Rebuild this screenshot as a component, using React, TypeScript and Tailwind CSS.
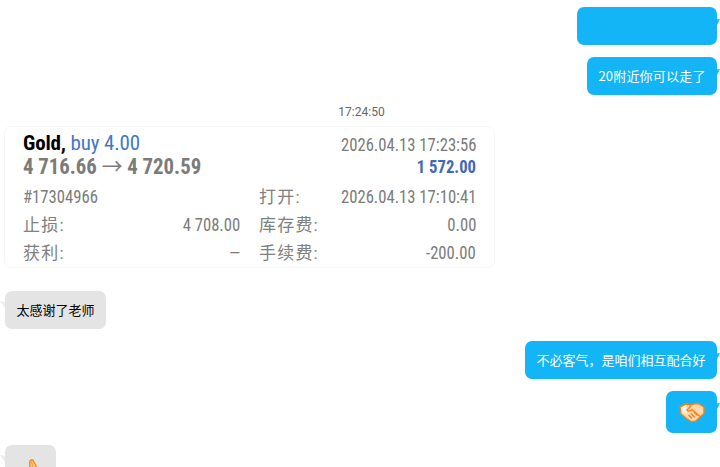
import React from "react";

const cardFont = "font-['Roboto','Noto_Sans_CJK_SC',sans-serif] [font-stretch:75%]";

function Tail({ side }: { side: "left" | "right" }) {
    if (side === "right") {
        return (
            <svg className="absolute top-[12px] right-[-3px]" width="3" height="6" viewBox="0 0 3 6">
                <path d="M0 0.5 L0 6 L3 0 Z" fill="#13b5f7" />
            </svg>
        );
    }
    return (
        <svg className="absolute top-[10px] left-[-5px]" width="5" height="7" viewBox="0 0 5 7">
            <path d="M0 0 L5 1 L5 7 Z" fill="#ededed" />
        </svg>
    );
}

function Handshake() {
    return (
        <svg width="26" height="21" viewBox="0 0 26 21">
            <path d="M1 5 L7 2 L12 3 L16 1.5 L20 2 L25 5 L25 11.5 L20 16 L16 19.5 L12 19.5 L7 16 L2 12 Z" fill="#ffd7a8" stroke="#ee8420" strokeWidth="1.4" strokeLinejoin="round" />
            <path d="M2 5.5 L7 3 L8.5 12 L3 11 Z" fill="#fff3e2" />
            <path d="M12 4 L8 8 Q10 10.5 13 7.5 L21 14.5" fill="none" stroke="#ee8420" strokeWidth="1.4" />
            <path d="M9.5 13 L13 16.5 M12 11.5 L16 15.5 M15 10 L18.5 13.5" fill="none" stroke="#ee8420" strokeWidth="1.3" />
        </svg>
    );
}

function Thumb() {
    return (
        <svg width="26" height="26" viewBox="0 0 26 26">
            <path d="M10 26 L6 20 Q10 17 12 14 Q11.5 9 12 6 Q14 3 16 7 Q19 12 20 17 L22 26 Z" fill="#ffc978" stroke="#ec8a24" strokeWidth="1.4" strokeLinejoin="round" />
            <path d="M13 6 Q15 10 15 14" fill="none" stroke="#f2a24a" strokeWidth="1" />
        </svg>
    );
}

function BlueBubble({ children, className }: { children?: React.ReactNode; className: string }) {
    return (
        <div className={`relative self-end bg-[#13b5f7] rounded-[7px] text-white text-[13px] flex items-center justify-center ${className}`}>
            {children}
            <Tail side="right" />
        </div>
    );
}

// roboto at its narrowest is still wider than the app's condensed face
function Num({ children, className }: { children: React.ReactNode; className?: string }) {
    return <span className={`inline-block whitespace-nowrap text-[18px] scale-x-[.925] origin-right ${className ?? ""}`}>{children}</span>;
}

function Row({ label, value }: { label: string; value?: string }) {
    return (
        <div className="flex justify-between items-center">
            <span className="tracking-[1.2px] text-[#808080]">{label}</span>
            {value && <Num>{value}</Num>}
        </div>
    );
}

export default function App() {
    return (
        <div className="w-[720px] h-[467px] overflow-hidden bg-white flex flex-col pt-[7px] pl-[5px] pr-[3px] font-['Noto_Sans_CJK_SC',sans-serif]">
            <BlueBubble className="w-[140px] h-[38px] shrink-0" />
            <BlueBubble className="w-[130px] h-[38px] shrink-0 mt-[12px]">
                <span className="tracking-[0.2px]">20附近你可以走了</span>
            </BlueBubble>

            <div className="text-center text-[12px] leading-[16px] text-[#666666] font-['Roboto',sans-serif] mt-[9px] pl-[1px] shrink-0">17:24:50</div>

            {/* deal card */}
            <div className={`w-[491px] h-[142px] ml-[-1px] mt-[6px] shrink-0 border border-[#f6f6f6] rounded-[7px] px-[18px] text-[#7b7b7b] ${cardFont}`}>
                <div className="flex justify-between pt-[3px] h-[24px] text-[21px] leading-[26px] tracking-[-0.15px]">
                    <div>
                        <span className="font-bold text-black">Gold, </span>
                        <span className="text-[#3f78c4]">buy 4.00</span>
                    </div>
                    <Num className="leading-[30px] tracking-normal">2026.04.13 17:23:56</Num>
                </div>
                <div className="flex justify-between h-[24px] items-center mt-[3px]">
                    <span className="inline-block whitespace-nowrap scale-x-[.945] origin-left text-[22px] font-bold">
                        4 716.66 <span className="font-normal">→</span> 4 720.59
                    </span>
                    <Num className="font-bold text-[#3f69b5]">1 572.00</Num>
                </div>
                <div className="grid grid-cols-[217px_217px] gap-x-[19px] text-[17px] leading-[28px] mt-[5px]">
                    <div>
                        <span className="inline-block whitespace-nowrap text-[18px] scale-x-[.925] origin-left">#17304966</span>
                    </div>
                    <Row label="打开:" value="2026.04.13 17:10:41" />
                    <Row label="止损:" value="4 708.00" />
                    <Row label="库存费:" value="0.00" />
                    <Row label="获利:" value="—" />
                    <Row label="手续费:" value="-200.00" />
                </div>
            </div>

            <div className="relative self-start w-[101px] h-[38px] mt-[23px] shrink-0 bg-[#e4e4e4] rounded-[7px] text-[13px] text-black flex items-center justify-center">
                太感谢了老师
                <Tail side="left" />
            </div>

            <BlueBubble className="w-[192px] h-[38px] shrink-0 mt-[12px]">不必客气，是咱们相互配合好</BlueBubble>
            <BlueBubble className="w-[51px] h-[42px] shrink-0 mt-[12px]"><Handshake /></BlueBubble>

            <div className="relative self-start w-[51px] h-[42px] mt-[12px] shrink-0 bg-[#e4e4e4] rounded-[7px] flex justify-center pt-[10px]">
                <Thumb />
                <Tail side="left" />
            </div>
        </div>
    );
}
